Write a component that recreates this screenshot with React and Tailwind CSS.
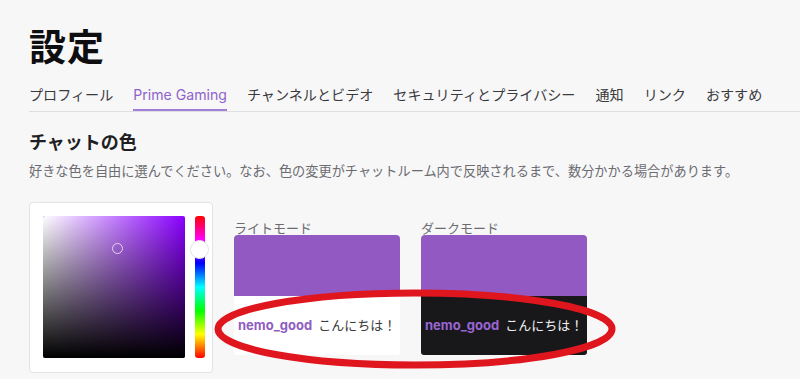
import React from 'react';

const tabs = ['プロフィール', 'Prime Gaming', 'チャンネルとビデオ', 'セキュリティとプライバシー', '通知', 'リンク', 'おすすめ'];

function Preview({ label, dark }) {
    return (
        <div className="flex w-[166px] flex-col">
            <div className="h-[14px] text-[13px] leading-[14px] text-[#6b6b70]">{label}</div>
            <div className="h-[61px] rounded-t-[4px] bg-[#9159c1]" />
            <div className={`flex h-[59px] items-center rounded-b-[3px] pl-[4px] text-[13px] ${dark ? 'bg-[#18181b] text-[#efeff1]' : 'bg-white text-[#3a3a3d]'}`}>
                <span className={`font-bold ${dark ? 'text-[#9a66d4]' : 'text-[#8f5cc2]'}`}>nemo_good</span>
                <span className="ml-[6px]">こんにちは！</span>
            </div>
        </div>
    );
}

export default function App() {
    return (
        <div className="relative h-[379px] w-[800px] overflow-hidden bg-[#f7f7f8] text-[#0e0e10] [font-family:Inter,'Noto_Sans_CJK_JP',sans-serif]">
            <div className="pl-[29px] pt-[23px]">
                <h1 className="text-[37px] font-bold leading-[50px] tracking-[1px]">設定</h1>

                {/* タブ */}
                <div className="mt-[11px] flex gap-[20px] border-b border-[#dedee3] text-[14.1px] text-[#3a3a3d]">
                    {tabs.map(t => (
                        <div key={t} className={`pb-[3px] leading-[22px] ${t === 'Prime Gaming' ? 'border-b-[2px] border-[#a07fd6] text-[#8e63c9]' : 'border-b-[2px] border-transparent'}`}>
                            {t}
                        </div>
                    ))}
                </div>

                <h2 className="mt-[20px] text-[18px] font-semibold leading-[22px] text-[#1f1f23]">チャットの色</h2>
                <p className="mt-[8px] text-[13.2px] leading-[18px] text-[#6b6b70]">
                    好きな色を自由に選んでください。なお、色の変更がチャットルーム内で反映されるまで、数分かかる場合があります。
                </p>

                <div className="mt-[22px] flex items-start">
                    {/* カラーピッカー */}
                    <div className="flex h-[171px] w-[184px] gap-[10px] rounded-[4px] border border-[#e3e3e6] bg-white pl-[13px] pt-[13px]">
                        <div className="relative h-[142px] w-[142px] overflow-hidden rounded-[2px] bg-[#8a00ff]">
                            <div className="absolute inset-0 bg-gradient-to-r from-white to-transparent" />
                            <div className="absolute inset-0 bg-gradient-to-b from-transparent to-black" />
                            <div className="absolute left-[69px] top-[27px] h-[11px] w-[11px] rounded-full border-[1.5px] border-[#e6d0f5]" />
                        </div>
                        <div className="relative h-[142px] w-[10px] rounded-[3px] bg-[linear-gradient(to_bottom,#ff0000,#ff00ff,#0000ff,#00ffff,#00ff00,#ffff00,#ff0000)]">
                            <div className="absolute left-[-5px] top-[24px] h-[19px] w-[19px] rounded-full border border-[#e5e5e5] bg-white" />
                        </div>
                    </div>

                    <div className="ml-[21px] mt-[19px] flex gap-[21px]">
                        <Preview label="ライトモード" />
                        <Preview label="ダークモード" dark />
                    </div>
                </div>
            </div>

            {/* 赤い丸の注釈 */}
            <svg className="pointer-events-none absolute left-0 top-0" width="800" height="379" viewBox="0 0 800 379">
                <ellipse cx="415" cy="329" rx="197" ry="36" fill="none" stroke="#e0161f" strokeWidth="7" />
            </svg>
        </div>
    );
}
